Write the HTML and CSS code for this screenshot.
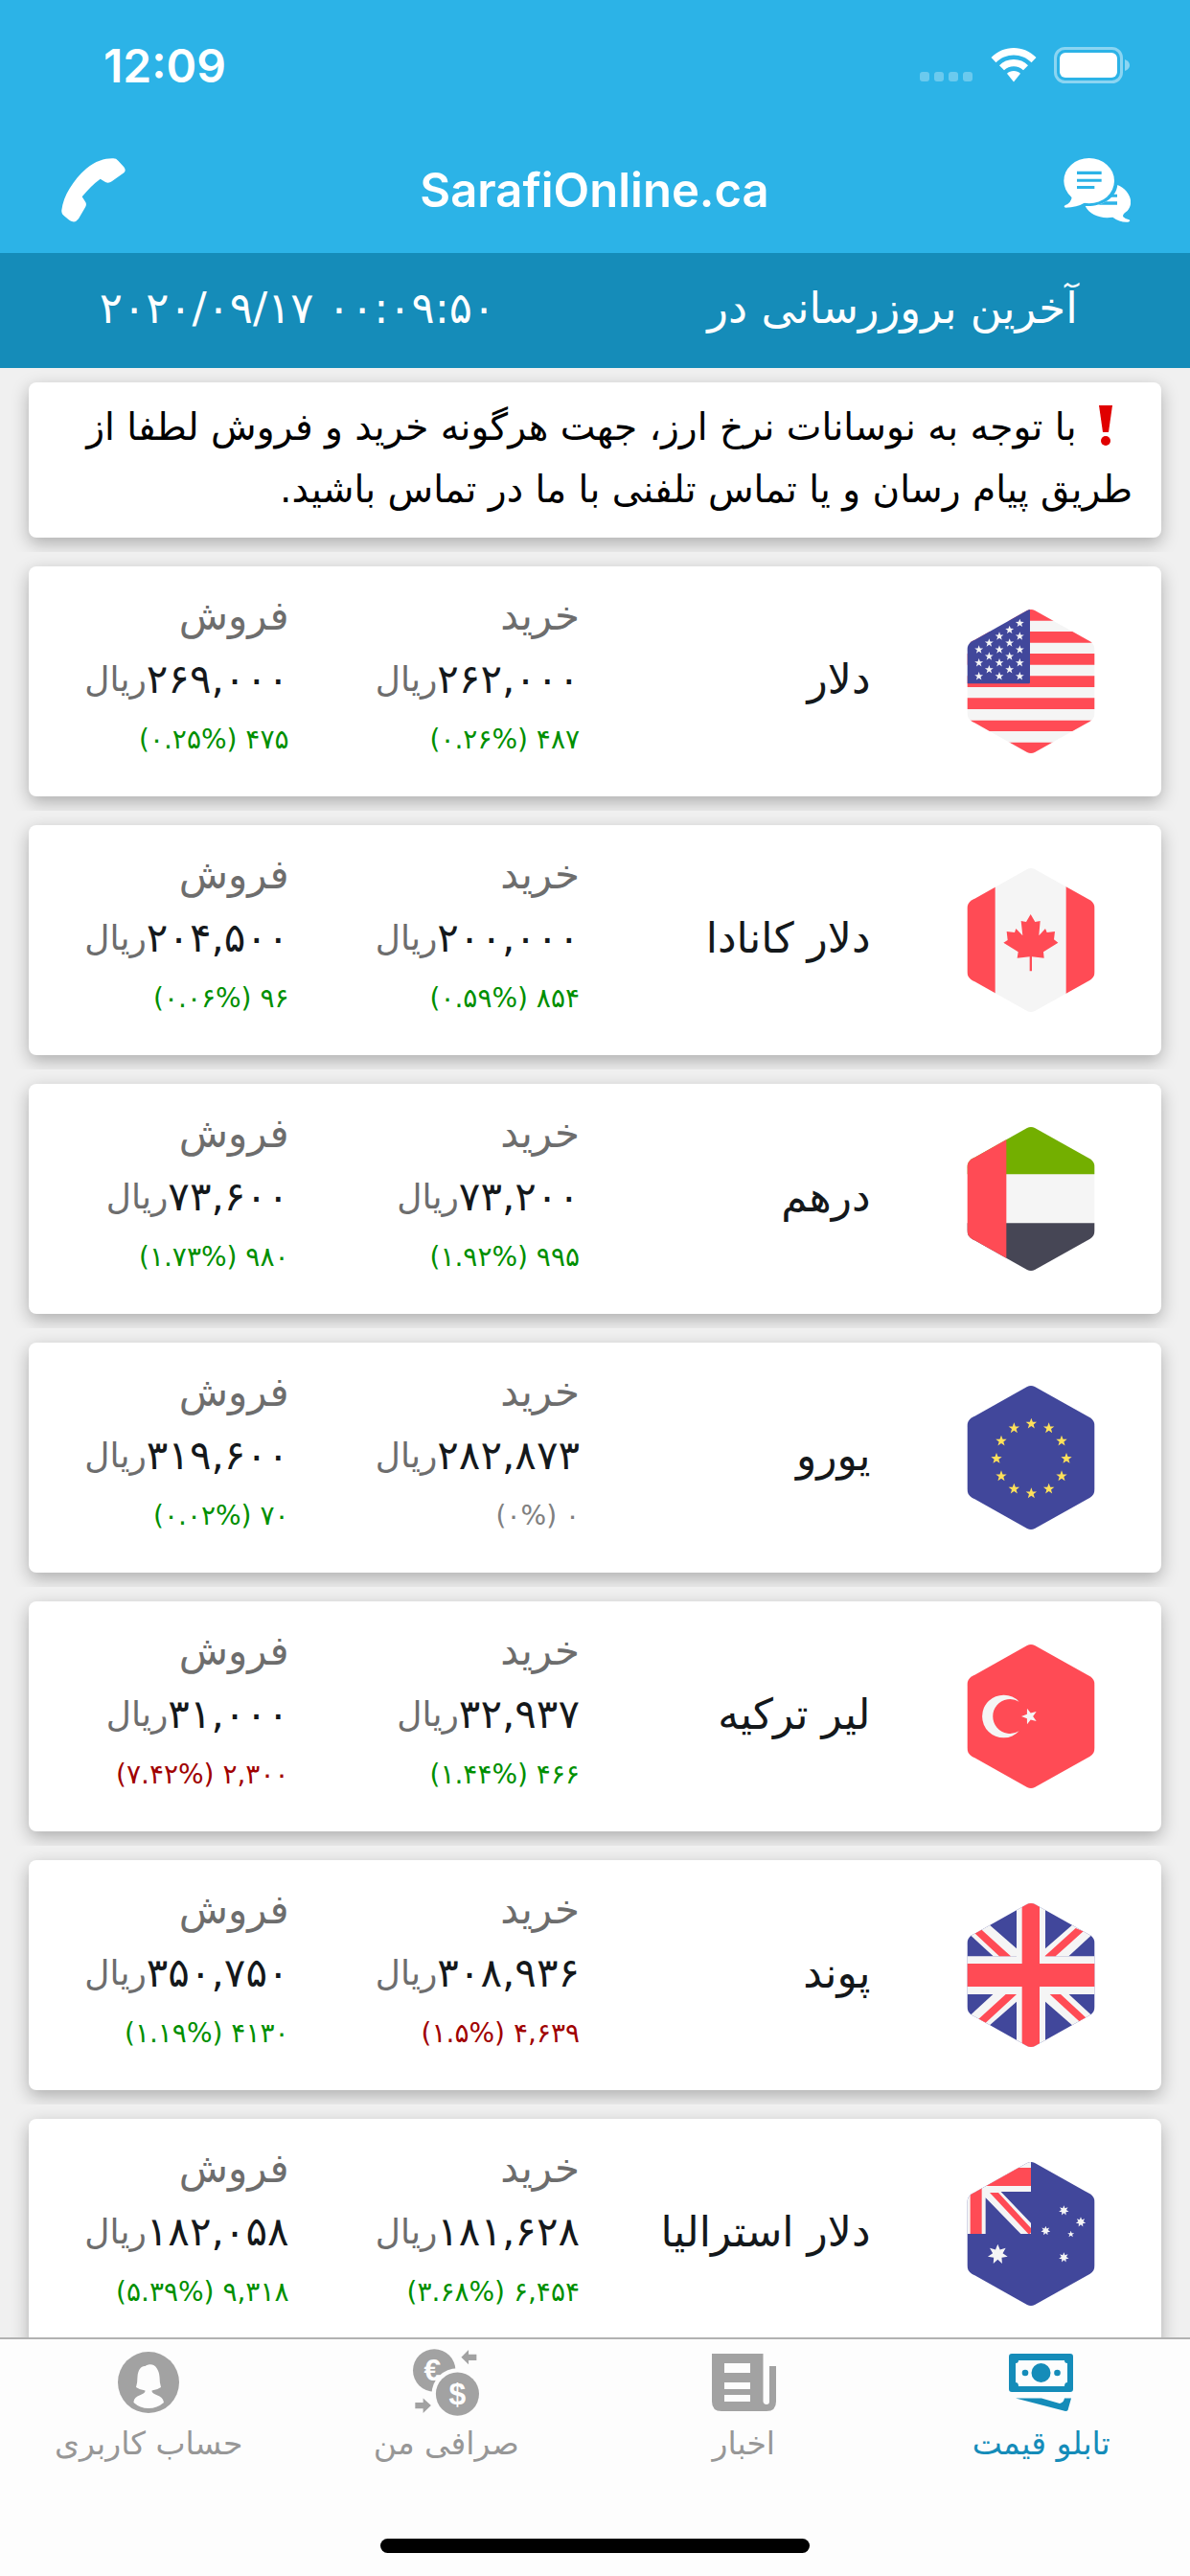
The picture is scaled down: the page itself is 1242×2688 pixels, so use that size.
FILE: index.html
```html
<!DOCTYPE html>
<html lang="fa" dir="rtl">
<head>
    <meta charset="UTF-8">
    <meta name="viewport" content="width=device-width">
    <title>SarafiOnline.ca</title>
    <link rel="stylesheet" href="styles.css">
</head>
<body>

    <!-- shared shapes for the flags -->
    <svg class="defs" width="0" height="0" aria-hidden="true">
        <defs>
            <clipPath id="hex"><path d="M188 3Q200 -3 212 3L385 100Q400 110 400 127V323Q400 340 385 350L212 447Q200 453 188 447L15 350Q0 340 0 323V127Q0 110 15 100Z"/></clipPath>
            <polygon id="star" points="0,-10 2.5,-3.2 9.5,-3.1 3.9,1.2 5.9,8.1 0,4 -5.9,8.1 -3.9,1.2 -9.5,-3.1 -2.5,-3.2"/>
            <polygon id="star7" points="0,-10 2.2,-4.5 7.8,-6.2 4.9,-1.1 9.7,2.2 3.9,3.1 4.3,9 0,5 -4.3,9 -3.9,3.1 -9.7,2.2 -4.9,-1.1 -7.8,-6.2 -2.2,-4.5"/>
        </defs>
    </svg>

    <header class="header" dir="ltr">
        <div class="status">
            <span class="time">12:09</span>
            <div class="status-icons">
                <svg width="56" height="36" viewBox="0 0 56 36" fill="#fff" fill-opacity=".3"><rect y="25" width="10" height="10" rx="3"/><rect x="15" y="25" width="10" height="10" rx="3"/><rect x="30" y="25" width="10" height="10" rx="3"/><rect x="45" y="25" width="10" height="10" rx="3"/></svg>
                <svg width="48" height="36" viewBox="0 0 48 36" fill="#fff"><path d="M24 0C33 0 41 3.500 47.500 10L42.500 15.200C37.500 10.300 31 7.500 24 7.500S10.500 10.300 5.500 15.200L.5 10C7 3.500 15 0 24 0Z"/><path d="M24 12C29.800 12 35 14.200 39 18.200L34 23.300C31.300 20.700 27.800 19.200 24 19.200S16.700 20.700 14 23.300L9 18.200C13 14.200 18.200 12 24 12Z"/><path d="M24 24C26.700 24 29.200 25 31 26.800L24 35.500L17 26.800C18.800 25 21.300 24 24 24Z"/></svg>
                <svg width="80" height="38" viewBox="0 0 80 38"><rect x="1.500" y="1.500" width="69" height="35" rx="10" fill="none" stroke="#fff" stroke-opacity=".45" stroke-width="3"/><rect x="6" y="6" width="60" height="26" rx="6" fill="#fff"/><path d="M74 13Q79 15 79 19T74 25Z" fill="#fff" fill-opacity=".45"/></svg>
            </div>
        </div>
        <div class="nav">
            <button type="button" class="nav-btn" aria-label="تماس">
                <svg width="67" height="67" viewBox="42 42 201 201" fill="#fff"><path d="M43 205C48 160 80 110 120 75C150 50 180 42 205 43Q214 43 220 50L238 70Q246 80 238 88L200 115Q190 122 180 117L164 107Q135 128 107 163L118 180Q122 187 117 196L96 232Q86 245 75 240Q65 236 46 218Q42 212 43 205Z"/></svg>
            </button>
            <h1>SarafiOnline.ca</h1>
            <button type="button" class="nav-btn" aria-label="گفتگو">
                <svg width="70" height="67" viewBox="58 42 210 201" fill="#fff"><ellipse cx="138" cy="113" rx="79" ry="71"/><path d="M85 160Q82 183 64 189Q56 194 64 197Q100 197 126 181Z"/><path d="M227 126C262 140 282 180 258 207C247 215 242 220 245 226Q250 232 263 235Q270 239 260 242Q235 244 212 227C175 233 140 220 126 192C175 195 222 170 227 126Z"/><path fill="#2cb3e7" d="M100 83H177V93H100ZM100 107H177V116H100ZM100 129H155V138H100ZM210 155H226V164H203ZM190 178H226V188H166Q180 186 190 178Z"/></svg>
            </button>
        </div>
    </header>

    <div class="update">
        <span>آخرین بروزرسانی در</span>
        <span dir="ltr">۲۰۲۰/۰۹/۱۷ ۰۰:۰۹:۵۰</span>
    </div>

    <main class="list">
        <div class="cell first">
            <p class="card notice"><svg class="alert" width="36" height="42" viewBox="0 0 36 42" fill="#e00000"><path d="M11 0H25L21 28H15Z"/><circle cx="18" cy="37" r="5"/></svg> با توجه به نوسانات نرخ ارز، جهت هرگونه خرید و فروش لطفا از<br>طریق پیام رسان و یا تماس تلفنی با ما در تماس باشید.</p>
        </div>

        <div class="cell">
            <article class="card rate">
                <svg class="flag" viewBox="0 0 400 450"><g clip-path="url(#hex)">
                    <path fill="#f5f5f5" d="M0 0H400V450H0Z"/>
                    <path fill="#ff4b55" d="M0 0H400V35H0ZM0 69H400V104H0ZM0 138H400V173H0ZM0 208H400V243H0ZM0 277H400V312H0ZM0 347H400V381H0ZM0 416H400V450H0Z"/>
                    <path fill="#41479b" d="M0 0H197V228Q197 232 193 232H0Z"/>
                    <g fill="#f5f5f5">
                        <use href="#star" transform="translate(37 126) scale(1.4)"/><use href="#star" transform="translate(37 167) scale(1.4)"/><use href="#star" transform="translate(37 209) scale(1.4)"/>
                        <use href="#star" transform="translate(69 105) scale(1.4)"/><use href="#star" transform="translate(69 147) scale(1.4)"/><use href="#star" transform="translate(69 188) scale(1.4)"/>
                        <use href="#star" transform="translate(101 84) scale(1.4)"/><use href="#star" transform="translate(101 126) scale(1.4)"/><use href="#star" transform="translate(101 167) scale(1.4)"/><use href="#star" transform="translate(101 209) scale(1.4)"/>
                        <use href="#star" transform="translate(133 64) scale(1.4)"/><use href="#star" transform="translate(133 105) scale(1.4)"/><use href="#star" transform="translate(133 147) scale(1.4)"/><use href="#star" transform="translate(133 188) scale(1.4)"/>
                        <use href="#star" transform="translate(165 43) scale(1.4)"/><use href="#star" transform="translate(165 84) scale(1.4)"/><use href="#star" transform="translate(165 126) scale(1.4)"/><use href="#star" transform="translate(165 167) scale(1.4)"/><use href="#star" transform="translate(165 209) scale(1.4)"/>
                    </g>
                </g></svg>
                <h2>دلار</h2>
                <div class="col"><p class="label">خرید</p><p class="price"><b>۲۶۲,۰۰۰</b>ریال</p><p class="change up">(۰.۲۶%) ۴۸۷</p></div>
                <div class="col"><p class="label">فروش</p><p class="price"><b>۲۶۹,۰۰۰</b>ریال</p><p class="change up">(۰.۲۵%) ۴۷۵</p></div>
            </article>
        </div>

        <div class="cell">
            <article class="card rate">
                <svg class="flag" viewBox="0 0 400 450"><g clip-path="url(#hex)">
                    <path fill="#f5f5f5" d="M0 0H400V450H0Z"/>
                    <path fill="#ff4b55" d="M0 0H88V450H0ZM310 0H400V450H310Z"/>
                    <path fill="#ff4b55" d="M199 144L213 168L229 165L225 211L245 189L250 201L275 198L272 223L285 233L239 262L241 281L203 277V322H196V277L157 281L160 262L114 233L127 225L124 198L149 201L153 189L174 211L169 165L185 168Z"/>
                </g></svg>
                <h2>دلار کانادا</h2>
                <div class="col"><p class="label">خرید</p><p class="price"><b>۲۰۰,۰۰۰</b>ریال</p><p class="change up">(۰.۵۹%) ۸۵۴</p></div>
                <div class="col"><p class="label">فروش</p><p class="price"><b>۲۰۴,۵۰۰</b>ریال</p><p class="change up">(۰.۰۶%) ۹۶</p></div>
            </article>
        </div>

        <div class="cell">
            <article class="card rate">
                <svg class="flag" viewBox="0 0 400 450"><g clip-path="url(#hex)">
                    <path fill="#f5f5f5" d="M0 0H400V450H0Z"/>
                    <path fill="#73af00" d="M0 0H400V148H0Z"/>
                    <path fill="#464655" d="M0 301H400V450H0Z"/>
                    <path fill="#ff4b55" d="M0 0H123V450H0Z"/>
                </g></svg>
                <h2>درهم</h2>
                <div class="col"><p class="label">خرید</p><p class="price"><b>۷۳,۲۰۰</b>ریال</p><p class="change up">(۱.۹۲%) ۹۹۵</p></div>
                <div class="col"><p class="label">فروش</p><p class="price"><b>۷۳,۶۰۰</b>ریال</p><p class="change up">(۱.۷۳%) ۹۸۰</p></div>
            </article>
        </div>

        <div class="cell">
            <article class="card rate">
                <svg class="flag" viewBox="0 0 400 450"><g clip-path="url(#hex)">
                    <path fill="#41479b" d="M0 0H400V450H0Z"/>
                    <g fill="#ffe15a">
                        <use href="#star" transform="translate(201 119) scale(1.8)"/><use href="#star" transform="translate(256 133) scale(1.8)"/><use href="#star" transform="translate(296 173) scale(1.8)"/>
                        <use href="#star" transform="translate(311 228) scale(1.8)"/><use href="#star" transform="translate(296 283) scale(1.8)"/><use href="#star" transform="translate(256 323) scale(1.8)"/>
                        <use href="#star" transform="translate(201 337) scale(1.8)"/><use href="#star" transform="translate(147 323) scale(1.8)"/><use href="#star" transform="translate(107 283) scale(1.8)"/>
                        <use href="#star" transform="translate(92 228) scale(1.8)"/><use href="#star" transform="translate(107 173) scale(1.8)"/><use href="#star" transform="translate(147 133) scale(1.8)"/>
                    </g>
                </g></svg>
                <h2>یورو</h2>
                <div class="col"><p class="label">خرید</p><p class="price"><b>۲۸۲,۸۷۳</b>ریال</p><p class="change">(۰%) ۰</p></div>
                <div class="col"><p class="label">فروش</p><p class="price"><b>۳۱۹,۶۰۰</b>ریال</p><p class="change up">(۰.۰۲%) ۷۰</p></div>
            </article>
        </div>

        <div class="cell">
            <article class="card rate">
                <svg class="flag" viewBox="0 0 400 450"><g clip-path="url(#hex)">
                    <path fill="#ff4b55" d="M0 0H400V450H0Z"/>
                    <path fill="#f5f5f5" d="M163 179A67 67 0 1 0 163 271A54 54 0 1 1 163 179Z"/>
                    <use href="#star" fill="#f5f5f5" transform="translate(196 225) rotate(-90) scale(2.600)"/>
                </g></svg>
                <h2>لیر ترکیه</h2>
                <div class="col"><p class="label">خرید</p><p class="price"><b>۳۲,۹۳۷</b>ریال</p><p class="change up">(۱.۴۴%) ۴۶۶</p></div>
                <div class="col"><p class="label">فروش</p><p class="price"><b>۳۱,۰۰۰</b>ریال</p><p class="change down">(۷.۴۲%) ۲,۳۰۰</p></div>
            </article>
        </div>

        <div class="cell">
            <article class="card rate">
                <svg class="flag" viewBox="0 0 400 450"><g clip-path="url(#hex)">
                    <path fill="#41479b" d="M0 0H400V450H0Z"/>
                    <path fill="#f5f5f5" d="M155 0H245V450H155ZM0 166H400V285H0Z"/>
                    <path fill="#f5f5f5" d="M-10 81L40 41L155 142V166H82ZM410 81L360 41L245 142V166H318ZM-10 369L40 409L155 308V284H82ZM410 369L360 409L245 308V284H318Z"/>
                    <path fill="#ff4b55" d="M172 0H227V450H172ZM0 189H400V261H0Z"/>
                    <path fill="#ff4b55" d="M20 90L40 78L137 166H101ZM340 78L364 88L277 166H243ZM28 370L50 382L155 285H121ZM259 285H293L375 361L358 376Z"/>
                </g></svg>
                <h2>پوند</h2>
                <div class="col"><p class="label">خرید</p><p class="price"><b>۳۰۸,۹۳۶</b>ریال</p><p class="change down">(۱.۵%) ۴,۶۳۹</p></div>
                <div class="col"><p class="label">فروش</p><p class="price"><b>۳۵۰,۷۵۰</b>ریال</p><p class="change up">(۱.۱۹%) ۴۱۳۰</p></div>
            </article>
        </div>

        <div class="cell">
            <article class="card rate">
                <svg class="flag" viewBox="0 0 400 450"><g clip-path="url(#hex)">
                    <path fill="#41479b" d="M0 0H400V450H0Z"/>
                    <path fill="#f5f5f5" d="M0 0H200V93H106L200 191V225H168L58 112V225H0Z"/>
                    <path fill="#ff4b55" d="M0 18H200V75H46V225H10V75H0ZM71 96H98L200 207V218Q200 225 192 225Z"/>
                    <g fill="#f5f5f5">
                        <use href="#star7" transform="translate(96 289) scale(3.200)"/><use href="#star7" transform="translate(303 152) scale(1.600)"/><use href="#star7" transform="translate(356 188) scale(1.600)"/>
                        <use href="#star7" transform="translate(246 215) scale(1.500)"/><use href="#star" transform="translate(325 226) scale(1.100)"/><use href="#star7" transform="translate(303 299) scale(1.600)"/>
                    </g>
                </g></svg>
                <h2>دلار استرالیا</h2>
                <div class="col"><p class="label">خرید</p><p class="price"><b>۱۸۱,۶۲۸</b>ریال</p><p class="change up">(۳.۶۸%) ۶,۴۵۴</p></div>
                <div class="col"><p class="label">فروش</p><p class="price"><b>۱۸۲,۰۵۸</b>ریال</p><p class="change up">(۵.۳۹%) ۹,۳۱۸</p></div>
            </article>
        </div>
    </main>

    <footer class="tabbar">
        <nav class="tabs">
            <a href="#" class="active">
                <svg width="67" height="70" viewBox="0 -5 67 70"><path fill-rule="evenodd" d="M3 0H64Q67 0 67 3V37Q67 40 64 40H3Q0 40 0 37V3Q0 0 3 0ZM10 7Q10 10 7 10V30Q10 30 10 34H58Q58 30 61 30V10Q58 10 58 7Z"/><circle cx="33.500" cy="20" r="10"/><circle cx="17" cy="20" r="3.300"/><circle cx="50.500" cy="20" r="3.300"/><path d="M7 46.500H34L53 52Q57 51 58 46.500H65L61.500 59Q61 60 59 60Z"/></svg>
                <span>تابلو قیمت</span>
            </a>
            <a href="#">
                <svg width="67" height="70" viewBox="0 -5 67 70"><path fill-rule="evenodd" d="M0 0H53.500V50Q54 53 57 53T60 50V13H67V50Q67 60 57 60H10Q0 60 0 50ZM13 10V20H40V10ZM13 30V37H40V30ZM13 43V50H40V43Z"/></svg>
                <span>اخبار</span>
            </a>
            <a href="#">
                <svg width="71" height="70" viewBox="17 29 212 211"><circle cx="86" cy="97" r="67"/><text x="80" y="129" class="coin">€</text><circle cx="159" cy="171" r="81" fill="#fdfdfd"/><circle cx="159" cy="171" r="68"/><text x="159" y="205" class="coin">$</text><path d="M171 55L194 32V46H219V65H194V78ZM76 207L51 184V198H26V217H51V231Z"/></svg>
                <span>صرافی من</span>
            </a>
            <a href="#">
                <svg width="64" height="70" viewBox="0 -3 64 70"><circle cx="32" cy="32" r="32"/><path fill="#fdfdfd" d="M32 13.500C39 12 43 19 43.500 26Q43.500 32 45 37Q41 40 35.500 40.500C35.500 46 47 44 48 53Q41 59 32 59T16.500 53C17 44 28.500 46 28.500 40.500Q23 40 19 37Q20.500 32 20.500 26C21 18 25 14.500 28.500 15Q30 13.500 32 13.500Z"/></svg>
                <span>حساب کاربری</span>
            </a>
        </nav>
        <div class="home"></div>
    </footer>

</body>
</html>
```
FILE: styles.css
```css
*{margin: 0;padding: 0;box-sizing: border-box;}
a{text-decoration: none;}
svg{display: block;flex: none;}
body{height: 100vh; display: flex; flex-direction: column; overflow: hidden; background: #f0f0f0; color: #14181b; font-family: "DejaVu Sans", sans-serif;}
.defs{position: absolute;}

.header{background: #2cb3e7; color: #fff; font-family: Inter, sans-serif;}
.status{height: 132px; padding: 4px 62px 0 108px; display: flex; justify-content: space-between; align-items: center;}
.time{font-size: 48px; font-weight: 600;}
.status-icons{display: flex; gap: 18px; align-items: center;}
.nav{height: 132px; padding: 0 62px 0 64px; display: flex; justify-content: space-between; align-items: center;}
.nav h1{font-size: 49px; font-weight: 600;}
.nav-btn{background: none; border: 0; cursor: pointer;}

.update{display: flex; padding-bottom: 4px; background: #158cb9; color: #fff; font-size: 45px; line-height: 116px;}
.update span{flex: 1; text-align: center;}

.list{flex: 1; min-height: 0; overflow: hidden;}
.cell{padding: 15px 30px; overflow: hidden;}
.card{background: #fff; border-radius: 8px; box-shadow: 0 6px 18px rgba(0,0,0,.28);}
.notice{padding: 14px 30px 18px; font-size: 39px; line-height: 65px; color: #000;}
.alert{display: inline-block; vertical-align: -6px; margin-right: 10px;}

.rate{display: grid; grid-template-columns: repeat(4, 1fr); column-gap: 32px; align-items: center;}
.flag{width: 134px; height: 150px; justify-self: center;}
.rate h2{padding-bottom: 6px; font-size: 44px; font-weight: normal; white-space: nowrap;}
.col{padding: 19px 0 30px; white-space: nowrap;}
.label{font-size: 42px; line-height: 65px; color: #6d6d6d;}
.price{display: flex; align-items: center; font-size: 36px; line-height: 68px; color: #6d6d6d;}
.price b{font-size: 42px; font-weight: normal; color: #14181b;}
.change{font-size: 28px; line-height: 58px; color: #808080; direction: ltr; text-align: right;}
.up{color: #008f00;}
.down{color: #a00000;}

.tabbar{background: #fdfdfd; border-top: 2px solid #b2b2b2;}
.tabs{display: flex; padding-top: 10px;}
.tabs a{flex: 1; display: flex; flex-direction: column; align-items: center; gap: 4px; font-size: 33px; line-height: 50px; color: #979797;}
.tabs svg{fill: #a2a2a2;}
.tabs .active{color: #158cb9;}
.tabs .active svg{fill: #158cb9;}
.coin{fill: #fdfdfd; font: bold 96px "Liberation Sans", sans-serif; text-anchor: middle; direction: ltr;}
.home{width: 36%; height: 15px; margin: 74px auto 24px; background: #000; border-radius: 8px;}
```
